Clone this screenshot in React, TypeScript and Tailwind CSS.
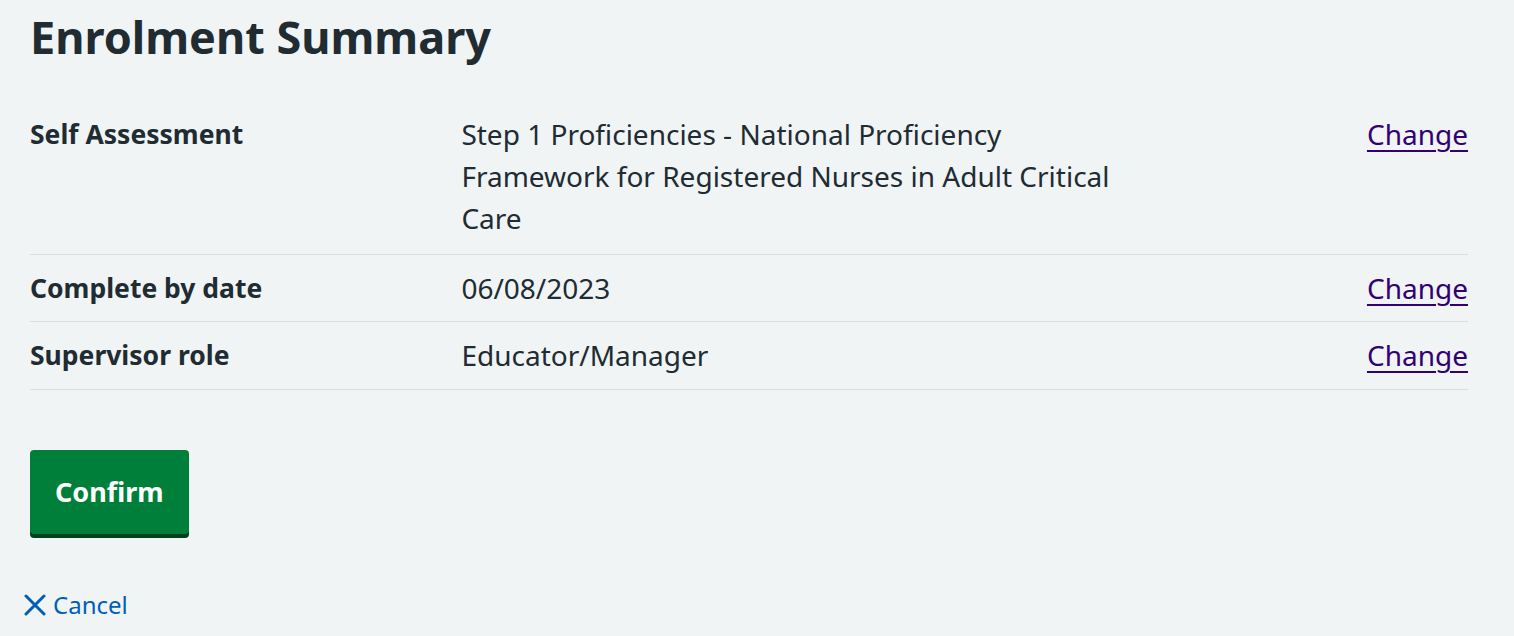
const rows = [
  {
    label: "Self Assessment",
    value:
      "Step 1 Proficiencies - National Proficiency Framework for Registered Nurses in Adult Critical Care",
  },
  { label: "Complete by date", value: "06/08/2023" },
  { label: "Supervisor role", value: "Educator/Manager" },
];

const App = () => {
  return (
    <div className="min-h-screen bg-[#f0f4f5] px-[30px] pt-[8px] font-['Noto_Sans',sans-serif] text-[#212b32]">
      <h1 className="text-[45px] font-bold leading-[58px]">Enrolment Summary</h1>

      <dl className="mt-[35px] w-[1438px] text-[28px] leading-[42px]">
        {rows.map((row) => (
          <div
            key={row.label}
            className="flex border-b border-[#d8dde0] pt-3 pb-[12px] first:pb-[15px] last:pb-[13px]"
          >
            <dt className="w-[30%] text-[26.5px] font-bold">{row.label}</dt>
            <dd className="w-[50%] pr-6">
              <div className="max-w-[670px]">{row.value}</div>
            </dd>
            <dd className="w-[20%] text-right">
              <a href="#" className="text-[#330072] underline underline-offset-[5px] decoration-[2px]">
                Change
              </a>
            </dd>
          </div>
        ))}
      </dl>

      <button className="mt-[60px] h-[84px] rounded-[4px] bg-[#007f3b] px-[25px] text-[27px] font-bold text-white shadow-[0_4px_0_#00401e]">
        Confirm
      </button>

      <div className="mt-[53px]">
        <a href="#" className="-ml-[6px] inline-flex items-center gap-[7px] text-[24px] leading-[36px] text-[#005eb8]">
          <svg width="22" height="22" viewBox="0 0 22 22" fill="none">
            <path d="M2 2 L20 20 M20 2 L2 20" stroke="#005eb8" strokeWidth="3" strokeLinecap="round" />
          </svg>
          Cancel
        </a>
      </div>
    </div>
  );
};

export default App;
